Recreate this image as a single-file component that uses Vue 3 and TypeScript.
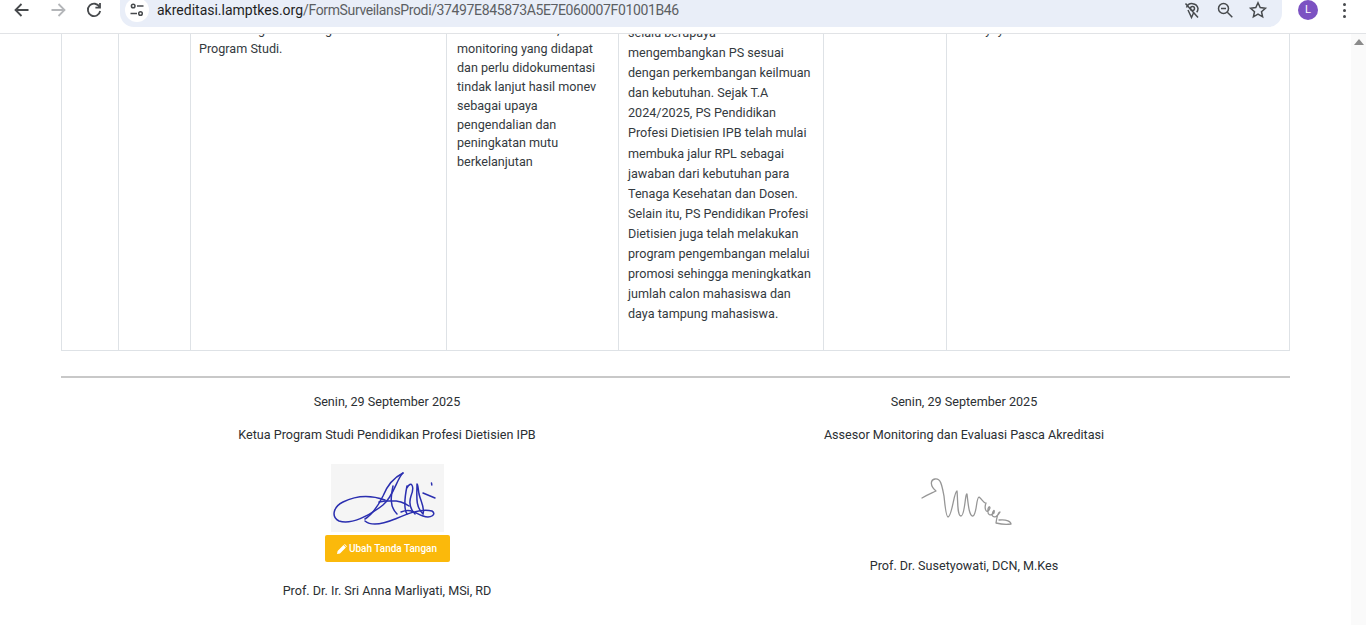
<script setup lang="ts">
// * Isi baris tabel yang masih kelihatan
const prodiLines = [
  'selalu berupaya',
  'mengembangkan PS sesuai',
  'dengan perkembangan keilmuan',
  'dan kebutuhan. Sejak T.A',
  '2024/2025, PS Pendidikan',
  'Profesi Dietisien IPB telah mulai',
  'membuka jalur RPL sebagai',
  'jawaban dari kebutuhan para',
  'Tenaga Kesehatan dan Dosen.',
  'Selain itu, PS Pendidikan Profesi',
  'Dietisien juga telah melakukan',
  'program pengembangan melalui',
  'promosi sehingga meningkatkan',
  'jumlah calon mahasiswa dan',
  'daya tampung mahasiswa.',
]

const colWidths = [57, 72, 256, 172, 205, 123, 343]
const tanggal = 'Senin, 29 September 2025'
</script>

<template>
  <div class="window">
    <!-- * Toolbar browser -->
    <header class="toolbar">
      <div class="nav-icons">
        <svg width="20" height="20" viewBox="0 0 20 20" class="ico">
          <path d="M16.5 10H4M9.5 4l-6 6 6 6" />
        </svg>
        <svg width="20" height="20" viewBox="0 0 20 20" class="ico ico-off">
          <path d="M3.5 10H16M10.5 4l6 6-6 6" />
        </svg>
        <svg width="20" height="20" viewBox="0 0 20 20" class="ico">
          <path d="M15.6 7A6.2 6.2 0 1 0 16.2 11" />
          <path d="M16 3v4.6h-4.6" />
        </svg>
      </div>
      <div class="omnibox">
        <span class="tune">
          <svg width="16" height="16" viewBox="0 0 16 16" class="ico ico-thin">
            <circle cx="4.2" cy="4" r="1.8" />
            <path d="M8 4h6.5M1.5 11.5H8" />
            <circle cx="11.5" cy="11.5" r="1.8" />
          </svg>
        </span>
        <span class="url"><span class="host">akreditasi.lamptkes.org</span><span class="path">/FormSurveilansProdi/37497E845873A5E7E060007F01001B46</span></span>
        <div class="omni-actions">
          <svg width="20" height="20" viewBox="0 0 20 20" class="ico ico-thin">
            <path d="M4.5 7.5a6 6 0 0 1 11.5 1c0 1.5-.5 2.700-1.300 3.700M6 10l3.500 7.500 2-4.500" />
            <circle cx="10.500" cy="8.500" r="2" />
            <path d="M3.500 3.500l12.500 14" />
          </svg>
          <svg width="20" height="20" viewBox="0 0 20 20" class="ico ico-thin">
            <circle cx="8.500" cy="8.500" r="5" />
            <path d="M6 8.500h5M12.300 12.300l5 5" />
          </svg>
          <svg width="20" height="20" viewBox="0 0 20 20" class="ico ico-thin">
            <path d="M10 2.800l2.200 4.800 5.200.6-3.900 3.500 1.100 5.100L10 14.200l-4.600 2.600 1.100-5.100L2.600 8.200l5.200-.6z" />
          </svg>
        </div>
      </div>
      <span class="avatar">L</span>
      <span class="kebab"><i></i><i></i><i></i></span>
    </header>

    <div class="viewport">
      <main class="content">
        <table class="tabel">
          <colgroup>
            <col v-for="(w, i) in colWidths" :key="i" :style="{ width: w + 'px' }" />
          </colgroup>
          <tbody>
            <tr>
              <td></td>
              <td></td>
              <td class="sempit">Mendukung visi dan tugas<br />Program Studi.</td>
              <td class="tight">
                Berdasarkan hasil, monitoring yang didapat dan perlu didokumentasi tindak lanjut hasil monev sebagai upaya pengendalian dan peningkatan mutu berkelanjutan
              </td>
              <td class="loose">
                <div v-for="line in prodiLines" :key="line">{{ line }}</div>
              </td>
              <td></td>
              <td>Data yayasan</td>
            </tr>
          </tbody>
        </table>

        <hr class="garis" />

        <section class="ttd-row">
          <div class="ttd">
            <p class="tanggal">{{ tanggal }}</p>
            <p class="jabatan">Ketua Program Studi Pendidikan Profesi Dietisien IPB</p>
            <div class="sign-box">
              <svg width="113" height="68" viewBox="0 0 113 68" fill="none" stroke="#2b2fb0" stroke-width="1.500" stroke-linecap="round">
                <path d="M54 36C40 31 26 31 12 38 2 43 0 53 8 57 20 61 38 52 52 41 63 32 66 14 72 9" />
                <path d="M72 9C62 14 56 22 52 32 47 42 42 50 34 55" />
                <path d="M34 57C40 62 52 60 64 55 76 50 90 44 101 47 106 50 100 55 92 52 84 49 80 44 70 48" />
                <path d="M48 38C58 36 70 36 78 42M62 22C60 32 58 42 66 50" />
                <path d="M76 22C74 32 72 44 76 50M76 24C80 16 84 22 80 32 78 38 78 44 84 50M86 20C86 32 84 42 92 50 94 44 90 38 88 30 87 24 87 20 86 20" />
                <path d="M92 29l12 5M100.500 19l.300 2" />
              </svg>
            </div>
            <button type="button" class="btn-ubah">
              <svg width="10" height="10" viewBox="0 0 10 10" fill="#fff">
                <path d="M0 10l.6-3L6.500 1.100l2.400 2.400L3 9.400zM7.100.500l.6-.4 2.200 2.200-.5.600z" />
              </svg>
              Ubah Tanda Tangan
            </button>
            <p class="nama nama-kiri">Prof. Dr. Ir. Sri Anna Marliyati, MSi, RD</p>
          </div>
          <div class="ttd">
            <p class="tanggal">{{ tanggal }}</p>
            <p class="jabatan">Assesor Monitoring dan Evaluasi Pasca Akreditasi</p>
            <div class="sign-plain">
              <svg width="130" height="70" viewBox="0 0 130 70" fill="none" stroke="#969696" stroke-width="1.300" stroke-linecap="round" stroke-linejoin="round">
                <path d="M23 32C28 29 33 27 37 25 31 20 31 14 36 13 42 12 43 20 45 30 46 40 47 51 49 51 53 51 55 25 58 25 59 34 58 50 62 50 66 50 66 27 68 28 69 36 70 51 74 50 78 48 77 32 80 31 83 33 85 38 87 37 85 42 87 48 90 44 92 41 90 39 89 43 88 50 92 50 95 47 96 43 94 44 93 49 95 53 99 50 101 46 99 46 98 50 97 57 101 58 106 59 112 58 112 56 108 53 100 54 97 60" />
              </svg>
            </div>
            <p class="nama nama-kanan">Prof. Dr. Susetyowati, DCN, M.Kes</p>
          </div>
        </section>
      </main>
      <aside class="scrollbar"><span class="arrow"></span></aside>
    </div>
  </div>
</template>

<style scoped>
.window {
  width: 1366px;
  height: 625px;
  overflow: hidden;
  display: flex;
  flex-direction: column;
  background: #fff;
  font-family: Roboto, "Liberation Sans", sans-serif;
  font-size: 12.6px;
  color: #343a40;
}

.toolbar {
  height: 33px;
  flex: none;
  display: flex;
  align-items: flex-start;
  border-bottom: 1px solid #e1e3e6;
  background: #fff;
  box-sizing: content-box;
}

.nav-icons {
  display: flex;
  gap: 16px;
  padding: 0 0 0 12px;
  width: 108px;
  box-sizing: border-box;
}

.ico {
  fill: none;
  stroke: #474a4d;
  stroke-width: 1.800;
  flex: none;
}

.ico-off {
  stroke: #b4b6b9;
}

.ico-thin {
  stroke-width: 1.500;
}

.omnibox {
  width: 1162px;
  height: 27px;
  margin-left: 12px;
  padding-left: 5px;
  box-sizing: border-box;
  display: flex;
  align-items: flex-start;
  background: #e9eef8;
  border-radius: 0 0 14px 14px;
}

.tune {
  width: 24px;
  height: 24px;
  margin-top: -2px;
  border-radius: 50%;
  background: #fff;
  display: flex;
  align-items: center;
  justify-content: center;
  flex: none;
}

.url {
  margin-left: 8px;
  font-size: 14px;
  line-height: 20px;
  white-space: nowrap;
}

.host {
  color: #1f1f1f;
}

.path {
  color: #5c5f63;
  letter-spacing: -0.37px;
}

.omni-actions {
  margin-left: auto;
  margin-right: 14px;
  display: flex;
  gap: 13px;
}

.avatar {
  width: 20px;
  height: 20px;
  margin-left: 16px;
  border-radius: 50%;
  background: #7c52c2;
  color: #fff;
  font-size: 11px;
  line-height: 20px;
  text-align: center;
  flex: none;
}

.kebab {
  margin-left: 25px;
  padding-top: 3px;
  display: flex;
  flex-direction: column;
  gap: 3px;
}

.kebab i {
  width: 3px;
  height: 3px;
  border-radius: 50%;
  background: #474a4d;
}

.viewport {
  flex: 1;
  min-height: 0;
  display: flex;
  overflow: hidden;
}

.content {
  flex: 1;
  padding: 0 61px;
  min-width: 0;
}

/* * Halaman ini posisinya sudah di-scroll, baris atas ketutup toolbar */
.tabel {
  width: 1228px;
  margin-top: -22px;
  table-layout: fixed;
  border-collapse: collapse;
}

.tabel td {
  border: 1px solid #dee2e6;
  padding: 8px 9px 26px;
  vertical-align: top;
  line-height: 18.9px;
}

.tabel td.sempit {
  padding-left: 8px;
}

.tabel td.tight {
  padding-left: 10px;
  padding-right: 10px;
}

.tabel td.loose {
  padding-top: 10px;
  line-height: 20.1px;
  white-space: nowrap;
}

.garis {
  margin: 25px 0 0;
  height: 2px;
  border: 0;
  background: #c8c8c8;
}

.ttd-row {
  display: grid;
  grid-template-columns: 577px 577px;
  justify-content: center;
  margin-top: 15px;
}

.ttd {
  display: flex;
  flex-direction: column;
  align-items: center;
}

.ttd p {
  margin: 0;
  line-height: 18px;
  color: #2b2f33;
}

.ttd .jabatan {
  margin-top: 15px;
}

.sign-box {
  width: 113px;
  height: 68px;
  margin-top: 20px;
  background: #f5f5f5;
}

.sign-box svg,
.sign-plain svg {
  display: block;
}

.sign-plain {
  margin-top: 22px;
  height: 70px;
}

.btn-ubah {
  width: 125px;
  height: 27px;
  margin-top: 3px;
  padding: 0;
  border: 0;
  border-radius: 2px;
  background: #fbb90b;
  color: #fff;
  font-family: inherit;
  font-size: 10px;
  font-weight: 500;
  display: flex;
  align-items: center;
  justify-content: center;
  gap: 2px;
}

.ttd .nama-kanan {
  margin-top: 21px;
}

.ttd .nama-kiri {
  margin-top: 20px;
}

.scrollbar {
  width: 15px;
  flex: none;
  background: #fafafa;
  position: relative;
}

.arrow {
  display: block;
  width: 0;
  height: 0;
  margin: 5px auto 0;
  border-left: 5px solid transparent;
  border-right: 5px solid transparent;
  border-bottom: 6px solid #8a8a8a;
}
</style>

<style>
html,
body {
  margin: 0;
  overflow: hidden;
}
</style>
